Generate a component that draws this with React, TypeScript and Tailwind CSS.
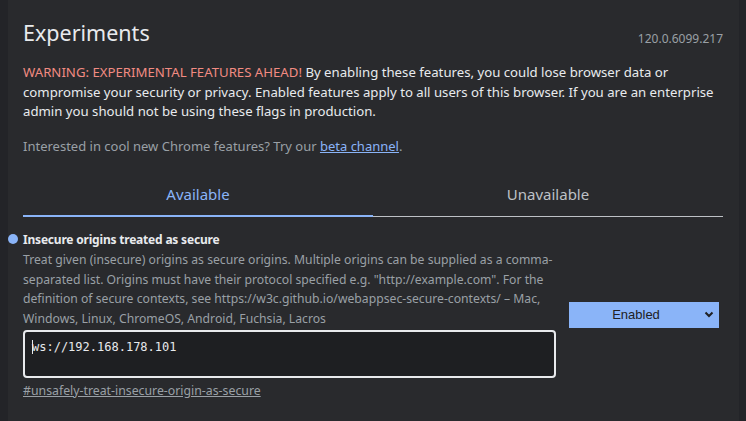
import React from "react";

export default function App() {
  return (
    <div
      className="w-[746px] h-[421px] overflow-hidden bg-[#232428] flex"
      style={{ fontFamily: '"Noto Sans", "Open Sans", sans-serif' }}
    >
      <div className="ml-[8px] w-[731px] h-full bg-[#292a2d] pl-[15px] pr-[16px]">
        <div className="flex items-end justify-between pt-[18px]">
          <h1 className="text-[21.5px] leading-[30px] text-[#e8eaed]">Experiments</h1>
          <div className="text-[12px] leading-[16px] text-[#9aa0a6] mb-[1px]">120.0.6099.217</div>
        </div>
        <p className="mt-[15px] text-[13.2px] leading-[19.5px] text-[#e8eaed] whitespace-nowrap">
          <span className="text-[#f28b82]">WARNING: EXPERIMENTAL FEATURES AHEAD!</span> By enabling these features, you could lose browser data or
          <br />
          compromise your security or privacy. Enabled features apply to all users of this browser. If you are an enterprise
          <br />
          admin you should not be using these flags in production.
        </p>
        <p className="mt-[15px] text-[13px] leading-[19.5px] text-[#9aa0a6]">
          Interested in cool new Chrome features? Try our{" "}
          <span className="text-[#8ab4f8] underline">beta channel</span>.
        </p>
        <div className="mt-[17px] flex w-[700px]">
          <div className="flex-1 flex flex-col items-center">
            <div className="h-[42px] flex items-center text-[15px] text-[#8ab4f8]">Available</div>
            <div className="w-full h-[2px] bg-[#8ab4f8]" />
          </div>
          <div className="flex-1 flex flex-col items-center">
            <div className="h-[42px] flex items-center text-[15px] text-[#bdc1c6]">Unavailable</div>
            <div className="w-full h-[2px] flex flex-col justify-end">
              <div className="h-[1px] bg-[#bdc1c6]" />
            </div>
          </div>
        </div>
        <div className="mt-[13px] flex items-center">
          <div className="w-[533px] relative">
            <div className="absolute left-[-15px] top-[4px] w-[10px] h-[10px] rounded-full bg-[#8ab4f8]" />
            <div className="text-[12px] leading-[19px] font-bold tracking-[-0.2px] text-[#e8eaed]">
              Insecure origins treated as secure
            </div>
            <p className="mt-[1px] text-[12.2px] leading-[19.5px] text-[#9aa0a6] whitespace-nowrap">
              Treat given (insecure) origins as secure origins. Multiple origins can be supplied as a comma-
              <br />
              separated list. Origins must have their protocol specified e.g. "http://example.com". For the
              <br />
              definition of secure contexts, see https://w3c.github.io/webappsec-secure-contexts/ – Mac,
              <br />
              Windows, Linux, ChromeOS, Android, Fuchsia, Lacros
            </p>
            <div className="mt-[2px] h-[48px] rounded-[4px] border-2 border-[#e8eaed] bg-[#1e1f22] px-[7px] pt-[7px]">
              <div
                className="relative text-[12px] leading-[16px] text-[#e8eaed]"
                style={{ fontFamily: '"DejaVu Sans Mono", "Liberation Mono", monospace' }}
              >
                <span className="absolute left-[0px] top-[1px] w-[1px] h-[14px] bg-[#e8eaed]" />
                ws://192.168.178.101
              </div>
            </div>
            <div className="mt-[3px] text-[12.3px] leading-[19px] text-[#9aa0a6] underline">
              #unsafely-treat-insecure-origin-as-secure
            </div>
          </div>
          <div className="ml-[13px] mt-[0px] w-[150px] h-[26px] bg-[#8ab4f8] flex items-center relative">
            <div
              className="flex-1 text-center text-[13px] text-[#202124] pr-[16px]"
              style={{ fontFamily: '"Liberation Sans", Arial, sans-serif' }}
            >
              Enabled
            </div>
            <svg className="absolute right-[5px] top-[9px]" width="10" height="8" viewBox="0 0 10 8">
              <path d="M1.5 1.5 L5 5 L8.5 1.5" stroke="#202124" strokeWidth="2" fill="none" />
            </svg>
          </div>
        </div>
      </div>
    </div>
  );
}
